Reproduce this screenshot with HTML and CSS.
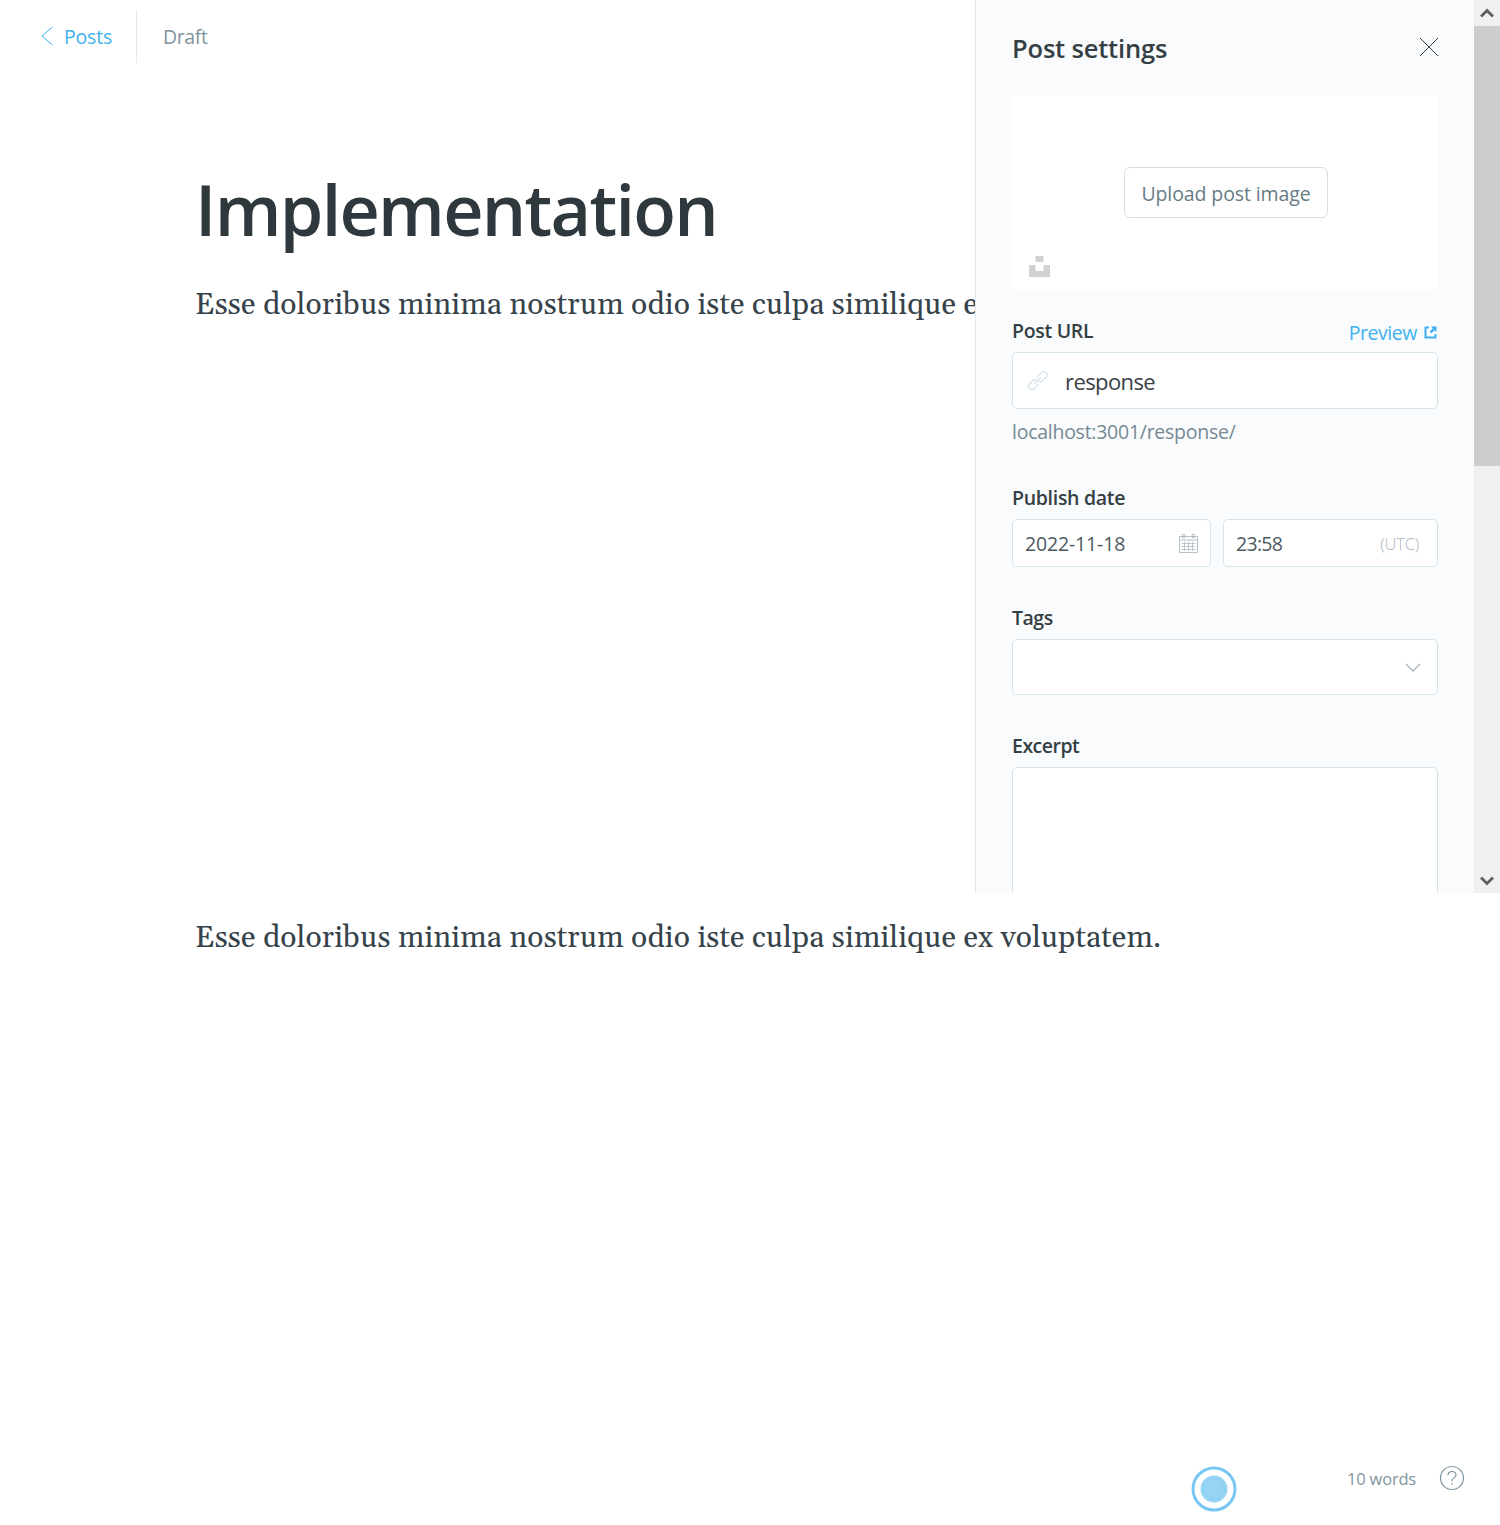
FILE: index.html
```html
<!DOCTYPE html>
<html lang="en">
<head>
<meta charset="utf-8">
<title>Implementation</title>
<link rel="stylesheet" href="styles.css">
</head>
<body>
<main class="editor">
  <header class="topbar">
    <a class="back"><svg class="back-icon" width="12" height="20" viewBox="0 0 12 20"><path d="M11.500 1 1 10l10.500 9"/></svg><span>Posts</span></a>
    <span class="status">Draft</span>
  </header>
  <article class="post">
    <h1 class="title">Implementation</h1>
    <p class="body-text">Esse doloribus minima nostrum odio iste culpa similique ex voluptatem.</p>
    <p class="body-text">Esse doloribus minima nostrum odio iste culpa similique ex voluptatem.</p>
  </article>
  <footer class="footer">
    <svg class="beacon" width="46" height="46" viewBox="0 0 46 46"><circle cx="23" cy="23" r="21" class="ring"/><circle cx="23" cy="23" r="13.500" class="dot"/><circle cx="23" cy="23" r="10.500" class="inner"/></svg>
    <span class="words">10 words</span>
    <svg class="help" width="26" height="26" viewBox="0 0 26 26"><circle cx="13" cy="13" r="11.500"/><path d="M9 10.200C9 7.800 10.600 6.500 13 6.500s4 1.300 4 3.400c0 3-4 3-4 6.100v.5M13 18.300v1.600"/></svg>
  </footer>
</main>
<aside class="settings">
  <div class="panel">
    <div class="panel-head"><h2>Post settings</h2>
      <svg width="20" height="20" viewBox="0 0 20 20" class="close"><path d="m1 1 18 18M19 1 1 19"/></svg></div>
    <div class="uploader">
      <button class="upload">Upload post image</button>
      <svg class="unsplash" width="21" height="21" viewBox="0 0 21 21"><path d="M6.500 0h8v6h-8zM0 9h6.500v6h8V9H21v12H0z"/></svg>
    </div>
    <section class="field url-field">
      <div class="label-row"><label>Post URL</label><a class="preview"><span>Preview</span><svg width="13" height="13" viewBox="0 0 13 13"><path d="M5 1.500H1.500v10h10V8"/><path class="fill" d="M7 .5h5.500V6L10.600 4.200 7.500 7.300 5.700 5.500 8.800 2.400z"/></svg></a></div>
      <div class="input url"><svg class="link" width="20" height="20" viewBox="0 0 20 20"><g transform="rotate(-45 10 10)"><path d="M8.500 12.500H1.500a3 3 0 0 1-3-3v-.5a3 3 0 0 1 3-3h5a3 3 0 0 1 3 2.500M11.500 6.500h7a3 3 0 0 1 3 3v.5a3 3 0 0 1-3 3h-5a3 3 0 0 1-3-2.500M5.500 9.500h9"/></g></svg><span>response</span></div>
      <p class="hint">localhost:3001/response/</p>
    </section>
    <section class="field date-field">
      <label>Publish date</label>
      <div class="dates">
        <div class="input date"><span>2022-11-18</span><svg class="calendar" width="19" height="19" viewBox="0 0 19 19"><path d="M.5 2.500h18v16H.5zM0 6h19M3.500.5h2.500v3H3.500zM13 .5h2.500v3H13z"/><path class="grid" d="M2.500 9.500h14M2.500 12.500h14M2.500 15.500h14M5.500 7.500v9.500M9.500 7.500v9.500M13.500 7.500v9.500"/></svg></div>
        <div class="input time"><span class="clock">23:58</span><span class="utc">(UTC)</span></div>
      </div>
    </section>
    <section class="field tags-field">
      <label class="tight">Tags</label>
      <div class="input tags"><svg width="16" height="9" viewBox="0 0 16 9"><path d="m1 1 7 7 7-7"/></svg></div>
    </section>
    <section class="field">
      <label class="tight">Excerpt</label>
      <div class="input excerpt"></div>
    </section>
  </div>
  <div class="scrollbar">
    <div class="arrow"><svg width="14" height="11" viewBox="0 0 14 11"><path d="M1 8.500 7 2.500l6 6"/></svg></div>
    <div class="thumb"></div>
    <div class="arrow down"><svg width="14" height="11" viewBox="0 0 14 11"><path d="m1 2.500 6 6 6-6"/></svg></div>
  </div>
</aside>
</body>
</html>
```
FILE: styles.css
```css
* { box-sizing: border-box; }
body { margin: 0; position: relative; width: 1500px; height: 1525px; overflow: hidden; background: #fff; color: #394047; font: 19.5px/26px "Open Sans", "Noto Sans", sans-serif; }
h1, h2, p { margin: 0; }
svg { display: block; flex: none; fill: none; stroke: currentColor; }
.editor { display: flex; flex-direction: column; height: 1525px; }
.topbar { display: flex; flex: none; align-items: center; height: 73px; padding-left: 41px; }
.back { display: flex; align-items: center; gap: 11px; height: 53px; width: 96px; border-right: 1px solid #dfeaf1; color: #3eb0ef; letter-spacing: -.2px; }
.back-icon { margin-top: -2px; }
.status { padding-left: 26px; color: #7f949e; letter-spacing: -.4px; }
.post { flex: 1; min-height: 0; padding: 89px 0 0 195px; }
.title { height: 95px; line-height: 95px; font-size: 70px; font-weight: 600; letter-spacing: -1.7px; color: #2e383d; }
.body-text { height: 633px; padding-top: 23px; font: 30px/50px "Gelasio", "Liberation Serif", serif; letter-spacing: .147px; color: #36434a; white-space: nowrap; }
.footer { display: flex; flex: none; height: 94px; padding: 34px 35px 0 0; justify-content: flex-end; color: #7f949e; font-size: 16.500px; }
.beacon { margin: .5px 110.500px 0 0; }
.words { padding-top: 1px; letter-spacing: -.2px; }
.ring { stroke: #78c6f3; stroke-width: 3; }
.dot { fill: #96d4f5; stroke: none; }
.inner { stroke: #88ccf2; stroke-dasharray: 6 2; }
.help { margin-left: 23px; stroke-width: 1.2; }
.settings { position: absolute; top: 0; right: 0; display: flex; width: 525px; height: 893px; overflow: hidden; background: #f9fbfc; border-left: 1px solid #dfe9ef; }
.panel { flex: 1; padding: 0 36px; }
.panel-head { display: flex; align-items: center; justify-content: space-between; height: 95px; padding-top: 1px; color: #343f44; }
.panel-head h2 { font-size: 25.500px; line-height: 36px; font-weight: 600; letter-spacing: -.18px; }
.close { margin: -2px -1px 0 0; }
.uploader { display: grid; grid-template-rows: 123px 72px; justify-items: center; height: 195px; border-radius: 5px; background: #fff; }
.upload { align-self: end; width: 204px; height: 51px; margin-left: 2px; padding: 2px 0 0; background: #fff; border: 1px solid #d3dfe5; border-radius: 6px; color: #667b85; font: inherit; letter-spacing: -.1px; }
.unsplash { justify-self: start; margin: 38px 0 0 17px; fill: #d2d2d2; stroke: none; }
label { display: block; font-weight: 600; color: #343f44; letter-spacing: -.3px; }
.tight { letter-spacing: -.5px; }
.label-row { display: flex; justify-content: space-between; height: 34px; }
.preview { display: flex; gap: 7px; align-items: center; height: 30px; margin-right: 1px; color: #3eb0ef; stroke-width: 2; letter-spacing: -.45px; }
.preview svg { margin-top: -2px; }
.fill { fill: currentColor; stroke: none; }
.input { display: flex; align-items: center; background: #fff; border: 1px solid #d5e3eb; border-radius: 5px; }
.url-field { height: 167px; padding-top: 28px; margin-bottom: 28px; }
.url { height: 57px; padding-left: 15px; gap: 17px; font-size: 22px; letter-spacing: -.6px; margin-bottom: 10px; }
.link { overflow: visible; color: #c9dce7; stroke-width: 1; }
.hint { color: #758a94; letter-spacing: -.26px; }
.date-field { height: 120px; }
.date-field label, .tags-field label, .field:last-child label { height: 34px; }
.dates { display: flex; gap: 12px; color: #4a5a61; }
.date { width: 199px; height: 48px; padding: 2px 12px 0; justify-content: space-between; letter-spacing: -.15px; }
.calendar { margin-top: -2px; color: #b4c0c7; }
.grid { stroke: #bdc8ce; }
.time { flex: 1; height: 48px; padding: 2px 18px 0 12px; justify-content: space-between; }
.clock { letter-spacing: -.7px; }
.utc { color: #a9b6bd; font-size: 16.500px; font-weight: 300; letter-spacing: -.2px; }
.tags-field { height: 128px; }
.tags { height: 56px; justify-content: flex-end; padding-right: 16px; color: #a5b8c2; }
.tags svg { stroke-width: 1.3; }
.excerpt { height: 160px; }
.scrollbar { display: flex; flex-direction: column; width: 26px; background: #f0f0f0; color: #606060; }
.arrow { display: grid; place-items: center; height: 26px; stroke-width: 3; }
.thumb { height: 440px; background: #cdcdcd; }
.down { margin-top: auto; }
```
